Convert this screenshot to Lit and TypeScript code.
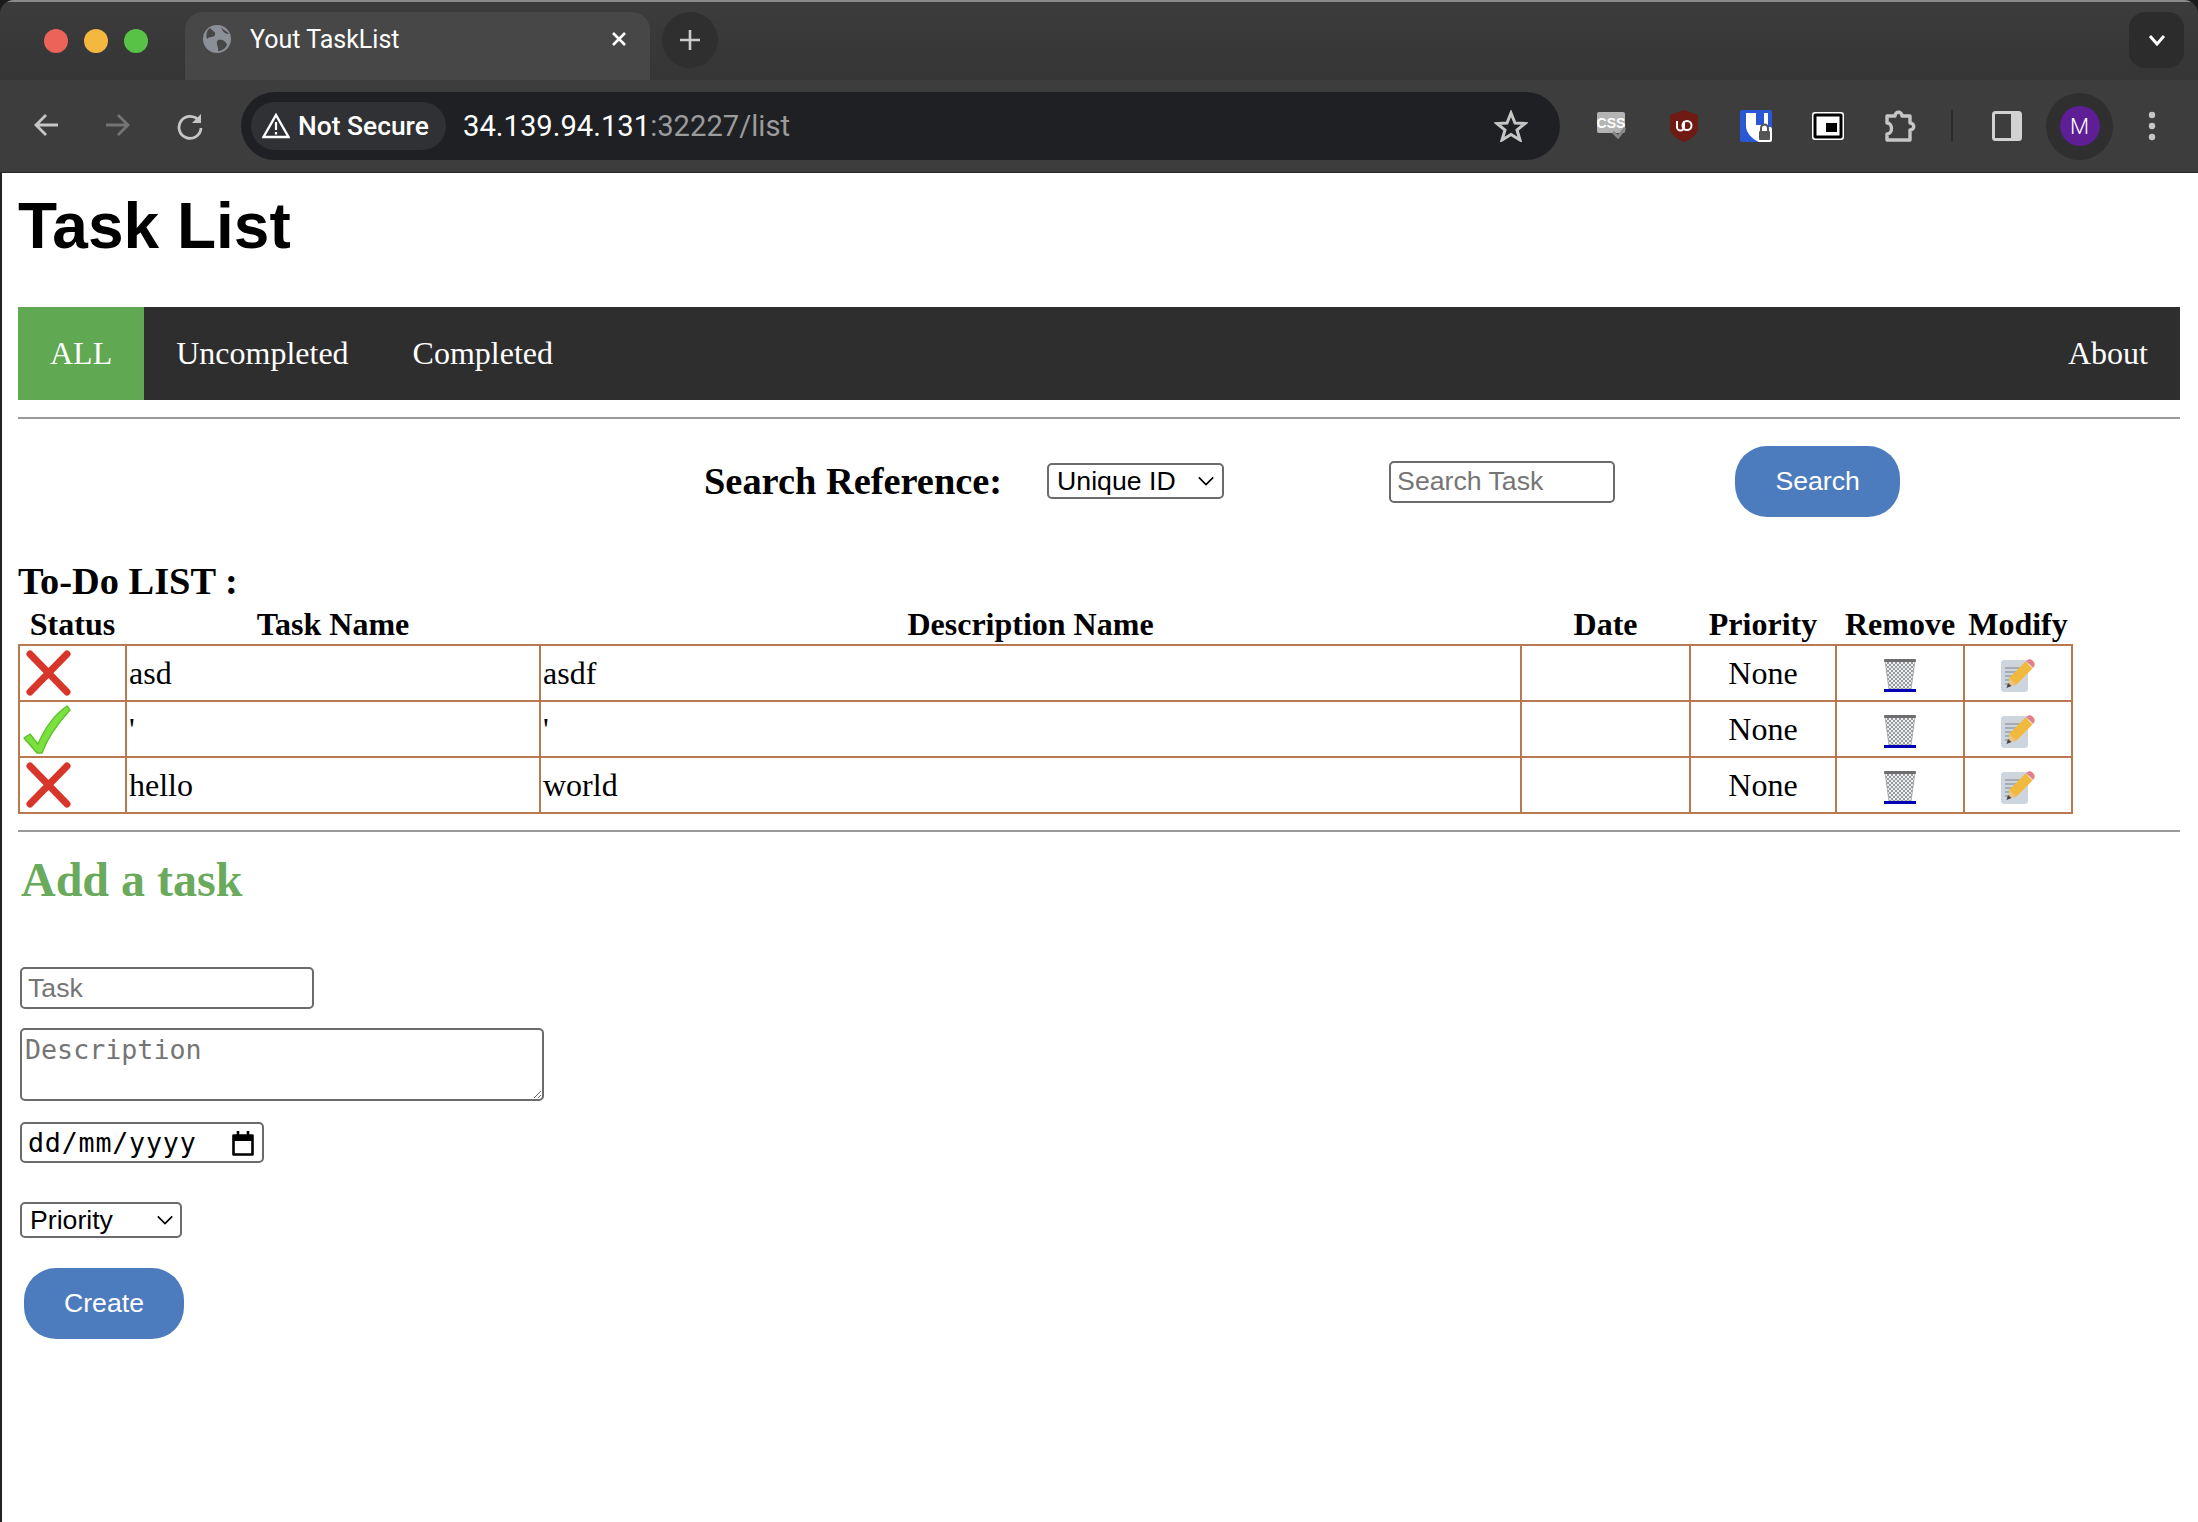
import { LitElement, html, css, unsafeCSS } from 'lit';
import { customElement } from 'lit/decorators.js';

const chevron = `url("data:image/svg+xml,%3Csvg xmlns='http://www.w3.org/2000/svg' width='18' height='18' viewBox='0 0 20 20'%3E%3Cpath d='M2 6l8 8 8-8' fill='none' stroke='black' stroke-width='1.8'/%3E%3C/svg%3E")`;

const crossIcon = html`<svg class="status-icon" width="50" height="48" viewBox="0 0 50 48">
  <path d="M8 5L45 43M45 5L8 43" stroke="#d9362b" stroke-width="7" stroke-linecap="round" fill="none"/>
</svg>`;

const checkIcon = html`<svg class="status-icon" width="50" height="50" viewBox="0 0 50 50">
  <path d="M2 34L8 30L16 40C22 26 32 11 45 2L48 6C38 17 26 32 20 49L15 49Z" fill="#7ae23c" stroke="#5fbf2e" stroke-width="1.4" stroke-linejoin="round"/>
</svg>`;

const trashIcon = html`<svg width="32" height="30" viewBox="0 0 32 30">
  <defs>
    <pattern id="mesh" width="4" height="4" patternUnits="userSpaceOnUse">
      <path d="M0 0L4 4M4 0L0 4" stroke="#8a8f96" stroke-width="0.9"/>
    </pattern>
  </defs>
  <path d="M1 2H31L27 30H5Z" fill="#f0f0f0"/>
  <path d="M1 2H31L27 30H5Z" fill="url(#mesh)" stroke="#a0a0a0" stroke-width="0.8"/>
  <rect x="0" y="0" width="32" height="3" rx="1" fill="#6e6e6e"/>
</svg>`;

const noteIcon = html`<svg width="34" height="33" viewBox="0 0 34 33">
  <rect x="0" y="1" width="27" height="32" rx="3" fill="#ccd5de"/>
  <path d="M4 9H20M4 13H17M4 17H14M4 21H11M4 25H9" stroke="#96a0aa" stroke-width="1.4"/>
  <path d="M11 23L28 6" stroke="#f2b93f" stroke-width="10"/>
  <path d="M6 28L8.5 19L15 26Z" fill="#e6c48c"/>
  <path d="M5.5 29L7 24L10.5 27Z" fill="#444"/>
  <path d="M25 2L27.5 0.5C29 0 30.5 0.5 32 2C33.5 3.5 34 5 33.5 6.5L32 9Z" fill="#e77f88"/>
</svg>`;

const rows = [
  { done: false, name: 'asd', desc: 'asdf' },
  { done: true, name: "'", desc: "'" },
  { done: false, name: 'hello', desc: 'world' },
];

@customElement('app-root')
export class AppRoot extends LitElement {
  static styles = css`
    :host {
      display: block;
      width: 2198px;
      height: 1522px;
      overflow: hidden;
      background: #1b1b1b;
      font-family: 'Liberation Serif', serif;
      color: #000;
    }

    /* browser chrome */
    .window {
      height: 1522px;
      display: flex;
      flex-direction: column;
      border-radius: 14px 14px 0 0;
      overflow: hidden;
    }

    .tabstrip {
      height: 80px;
      box-sizing: border-box;
      padding-top: 12px;
      background: linear-gradient(#3c3c3c, #353535);
      border-top: 2px solid #8a8a8a;
      display: flex;
      font-family: 'Roboto', sans-serif;
      color: #fff;
    }

    .lights {
      width: 185px;
      padding-left: 44px;
      box-sizing: border-box;
      display: flex;
      gap: 16px;
      padding-top: 15px;
    }

    .light {
      width: 24px;
      height: 24px;
      border-radius: 50%;
    }

    .tab {
      width: 465px;
      height: 68px;
      margin-top: -2px;
      box-sizing: border-box;
      background: #474747;
      border-radius: 18px 18px 0 0;
      display: flex;
      align-items: center;
      padding: 0 22px 14px 18px;
      font-size: 25px;
    }

    .tab-title {
      margin-left: 19px;
      flex: 1;
    }

    .newtab {
      width: 56px;
      height: 56px;
      margin: -2px 0 0 12px;
      border-radius: 50%;
      background: #2f2f2f;
      display: flex;
      align-items: center;
      justify-content: center;
    }

    .spacer {
      flex: 1;
    }

    .tabmenu {
      width: 55px;
      height: 56px;
      margin: -2px 14px 0 0;
      border-radius: 16px;
      background: #2c2c2c;
      display: flex;
      align-items: center;
      justify-content: center;
    }

    .toolbar {
      height: 93px;
      box-sizing: border-box;
      background: #3d3d3d;
      border-bottom: 1px solid #262626;
      display: flex;
      align-items: center;
      font-family: 'Roboto', sans-serif;
      color: #fff;
    }

    .nav-btn {
      width: 72px;
      display: flex;
      justify-content: center;
    }

    .nav-btns {
      display: flex;
      margin-left: 10px;
      margin-right: 15px;
    }

    .omnibox {
      width: 1319px;
      height: 68px;
      background: #1f2023;
      border-radius: 34px;
      display: flex;
      align-items: center;
      padding: 0 32px 0 10px;
      box-sizing: border-box;
      flex-shrink: 0;
    }

    .secure {
      height: 48px;
      width: 195px;
      box-sizing: border-box;
      border-radius: 24px;
      background: #303134;
      display: flex;
      align-items: center;
      gap: 8px;
      padding-left: 11px;
      font-size: 26.4px;
      font-weight: 500;
      white-space: nowrap;
    }

    .url {
      margin-left: 17px;
      font-size: 29.2px;
      flex: 1;
      color: #9b9b9b;
    }

    .url b {
      font-weight: 400;
      color: #fff;
    }

    .ext {
      display: flex;
      align-items: center;
      margin-left: 16px;
    }

    .ext-slot {
      width: 72px;
      display: flex;
      justify-content: center;
      align-items: center;
    }

    .sep {
      width: 2px;
      height: 32px;
      background: #2b2b2b;
      margin: 0 39px 0 15px;
    }

    .avatar-wrap {
      width: 67px;
      height: 67px;
      border-radius: 50%;
      background: #2f2f2f;
      display: flex;
      align-items: center;
      justify-content: center;
      margin-left: 24px;
    }

    .avatar {
      width: 40px;
      height: 40px;
      border-radius: 50%;
      background: #5e1f96;
      display: flex;
      align-items: center;
      justify-content: center;
      font-size: 22px;
      font-weight: 300;
    }

    .dots {
      margin-left: 35px;
    }

    /* page */
    .page {
      flex: 1;
      background: #fff;
      border-left: 2px solid #222;
      padding: 0 18px 0 16px;
    }

    h1 {
      margin: 21px 0 49px;
      font: bold 64px/64px 'Liberation Sans', sans-serif;
    }

    .menu {
      height: 93px;
      background: #2e2e2e;
      display: flex;
      font-size: 32px;
      color: #fff;
    }

    .menu a {
      padding: 0 32px;
      line-height: 93px;
    }

    .menu a.active {
      background: #60a851;
    }

    .menu a.about {
      margin-left: auto;
    }

    hr {
      border: 0;
      height: 2px;
      background: #9a9a9a;
      margin: 0;
    }

    .menu + hr {
      margin-top: 17px;
    }

    .search {
      display: flex;
      align-items: center;
      margin: 27px 0 0 686px;
    }

    .search-label {
      font-size: 38.4px;
      font-weight: bold;
      margin-right: 45px;
      margin-bottom: 2px;
    }

    input,
    select,
    textarea,
    .date {
      box-sizing: border-box;
      border: 2px solid #6b6b6b;
      border-radius: 5px;
      background: #fff;
      font: 26.67px 'Liberation Sans', sans-serif;
      color: #000;
      margin: 0;
      outline: none;
    }

    input::placeholder,
    textarea::placeholder {
      color: #757575;
    }

    select {
      appearance: none;
      background-image: ${unsafeCSS(chevron)};
      background-repeat: no-repeat;
    }

    .ref-select {
      width: 177px;
      height: 36px;
      padding: 0 0 0 8px;
      background-position: right 7px center;
      margin: 0 165px 2px 0;
    }

    .search-input {
      width: 226px;
      height: 42px;
      padding: 0 6px;
      margin-right: 120px;
    }

    .btn {
      border: 0;
      background: #4d7cbe;
      color: #fff;
      font: 26.67px 'Liberation Sans', sans-serif;
      border-radius: 32px;
    }

    .search-btn {
      width: 165px;
      height: 71px;
    }

    h3 {
      font-size: 38.4px;
      line-height: 43px;
      margin: 43px 0 0;
    }

    table {
      width: 2053px;
      table-layout: fixed;
      border-collapse: collapse;
      font-size: 32px;
    }

    th {
      padding: 3px 0 1px;
      line-height: 37px;
      font-weight: bold;
      text-align: center;
    }

    td {
      border: 2px solid #b87850;
      height: 54px;
      padding: 0 2px;
      line-height: 37px;
    }

    td.center {
      text-align: center;
    }

    td.status {
      padding: 0;
    }

    .status-icon,
    td svg {
      display: block;
    }

    .status-icon {
      margin-left: 2px;
    }

    .action {
      display: inline-block;
      vertical-align: middle;
      border-bottom: 3px solid #0000b4;
    }

    .action-plain {
      display: inline-block;
      vertical-align: middle;
    }

    .col-status { width: 107px; }
    .col-task { width: 414px; }
    .col-desc { width: 981px; }
    .col-date { width: 169px; }
    .col-pri { width: 146px; }
    .col-rem { width: 128px; }
    .col-mod { width: 108px; }

    table + hr {
      margin-top: 16px;
    }

    h2 {
      margin: 20px 0 60px 3px;
      font-size: 48px;
      line-height: 55px;
      color: #6aaa5c;
    }

    form {
      margin-left: 2px;
      display: flex;
      flex-direction: column;
      align-items: flex-start;
    }

    .task-input {
      width: 294px;
      height: 42px;
      padding: 0 6px;
      margin-bottom: 19px;
    }

    textarea {
      width: 524px;
      height: 73px;
      padding: 4px 3px;
      resize: both;
      font-family: 'DejaVu Sans Mono', monospace;
      display: block;
      margin-bottom: 21px;
    }

    .date {
      width: 244px;
      height: 41px;
      display: flex;
      align-items: center;
      justify-content: space-between;
      padding: 0 8px 0 6px;
      font-family: 'DejaVu Sans Mono', monospace;
      letter-spacing: 0.8px;
      margin-bottom: 39px;
    }

    .pri-select {
      width: 162px;
      height: 36px;
      padding: 0 0 0 8px;
      background-position: right 6px center;
      margin-bottom: 30px;
    }

    .create-btn {
      width: 160px;
      height: 71px;
      margin-left: 4px;
    }
  `;

  render() {
    return html`
      <div class="window">
        <div class="tabstrip">
          <div class="lights">
            <div class="light" style="background:#ec6459"></div>
            <div class="light" style="background:#f4b73f"></div>
            <div class="light" style="background:#58c246"></div>
          </div>
          <div class="tab">
            <svg width="28" height="28" viewBox="0 0 28 28">
              <circle cx="14" cy="14" r="14" fill="#8b8f98"/>
              <path d="M7 3C10 6 13 7 12 10C11 13 6 11 4 14C3 11 3 6 7 3ZM15 15C19 14 23 16 24 20C22 24 18 26 15 26C16 22 12 18 15 15ZM18 2C20 5 24 6 26 9C23 9 20 8 18 2Z" fill="#474747"/>
            </svg>
            <span class="tab-title">Yout TaskList</span>
            <svg width="18" height="18" viewBox="0 0 18 18">
              <path d="M3 3L15 15M15 3L3 15" stroke="#fff" stroke-width="2.6"/>
            </svg>
          </div>
          <div class="newtab">
            <svg width="22" height="22" viewBox="0 0 22 22">
              <path d="M11 1V21M1 11H21" stroke="#ccc" stroke-width="2.6"/>
            </svg>
          </div>
          <div class="spacer"></div>
          <div class="tabmenu">
            <svg width="18" height="12" viewBox="0 0 18 12">
              <path d="M2 2L9 10L16 2" fill="none" stroke="#fff" stroke-width="3"/>
            </svg>
          </div>
        </div>
        <div class="toolbar">
          <div class="nav-btns">
            <div class="nav-btn">
              <svg width="26" height="26" viewBox="0 0 26 26">
                <path d="M25 13H3M13 3L3 13L13 23" fill="none" stroke="#c6c6c6" stroke-width="2.8"/>
              </svg>
            </div>
            <div class="nav-btn">
              <svg width="26" height="26" viewBox="0 0 26 26">
                <path d="M1 13H23M13 3L23 13L13 23" fill="none" stroke="#747474" stroke-width="2.8"/>
              </svg>
            </div>
            <div class="nav-btn">
              <svg width="28" height="28" viewBox="0 0 28 28">
                <path d="M23 9A11 11 0 1 0 25 16" fill="none" stroke="#c6c6c6" stroke-width="2.8"/>
                <path d="M25 2V11H16Z" fill="#c6c6c6"/>
              </svg>
            </div>
          </div>
          <div class="omnibox">
            <div class="secure">
              <svg width="28" height="26" viewBox="0 0 28 26">
                <path d="M14 2L26.5 24H1.5Z" fill="none" stroke="#fff" stroke-width="2.4"/>
                <path d="M14 9V17M14 19V21.5" stroke="#fff" stroke-width="2.2"/>
              </svg>
              <span>Not Secure</span>
            </div>
            <div class="url"><b>34.139.94.131</b>:32227/list</div>
            <svg width="34" height="32" viewBox="0 0 34 32">
              <path d="M17 3L21 13L31 13.5L23 20L26 30L17 24.5L8 30L11 20L3 13.5L13 13Z" fill="none" stroke="#c6c6c6" stroke-width="3"/>
            </svg>
          </div>
          <div class="ext">
            <div class="ext-slot">
              <svg width="30" height="30" viewBox="0 0 30 30">
                <rect x="0" y="1" width="28" height="21" rx="2" fill="#b4b4b4"/>
                <text x="14" y="17" text-anchor="middle" font-family="Liberation Sans" font-size="14" font-weight="bold" fill="#fff">CSS</text>
                <path d="M16 21L21 26L28 17" fill="none" stroke="#888" stroke-width="3"/>
              </svg>
            </div>
            <div class="ext-slot">
              <svg width="30" height="32" viewBox="0 0 30 32">
                <path d="M15 0L29 5V18C29 25 20 30 15 32C10 30 1 25 1 18V5Z" fill="#6f1a12"/>
                <path d="M8 11V17A3.5 3.5 0 0 0 15 17V11" fill="none" stroke="#fff" stroke-width="2"/>
                <circle cx="18" cy="15.5" r="4.5" fill="none" stroke="#fff" stroke-width="2"/>
              </svg>
            </div>
            <div class="ext-slot">
              <svg width="32" height="32" viewBox="0 0 32 32">
                <rect width="32" height="32" rx="2" fill="#2a57d3"/>
                <path d="M6 3H28V20C28 24 23 28 17 31C11 28 6 22 6 16Z" fill="#fff"/>
                <rect x="16" y="3" width="8" height="12" fill="#2a57d3"/>
                <rect x="17" y="17" width="15" height="15" rx="2" fill="#fff"/>
                <rect x="19" y="21" width="11" height="9" rx="1" fill="#555"/>
                <path d="M21 21V18A3.5 3.5 0 0 1 28 18V21" fill="none" stroke="#555" stroke-width="2"/>
              </svg>
            </div>
            <div class="ext-slot">
              <svg width="32" height="28" viewBox="0 0 32 28">
                <rect width="32" height="28" rx="3" fill="#fff"/>
                <rect x="1.5" y="1.5" width="29" height="25" rx="2" fill="#000"/>
                <rect x="4.5" y="4.5" width="23" height="19" fill="#fff"/>
                <rect x="14" y="11" width="11" height="9" fill="#000"/>
              </svg>
            </div>
            <div class="ext-slot">
              <svg width="34" height="34" viewBox="0 0 34 34">
                <path d="M4 7H12C12 2 19 2 19 7H27V14C32 14 32 21 27 21V31H4V25C10 25 10 14 4 14Z" fill="none" stroke="#c6c6c6" stroke-width="3.4" stroke-linejoin="round"/>
              </svg>
            </div>
          </div>
          <div class="sep"></div>
          <svg width="30" height="30" viewBox="0 0 30 30">
            <rect x="1.5" y="1.5" width="27" height="27" rx="2" fill="none" stroke="#d2d2d2" stroke-width="3"/>
            <rect x="19" y="2" width="10" height="26" fill="#d2d2d2"/>
          </svg>
          <div class="avatar-wrap"><div class="avatar">M</div></div>
          <svg class="dots" width="8" height="30" viewBox="0 0 8 30">
            <circle cx="4" cy="4" r="3.2" fill="#c6c6c6"/>
            <circle cx="4" cy="15" r="3.2" fill="#c6c6c6"/>
            <circle cx="4" cy="26" r="3.2" fill="#c6c6c6"/>
          </svg>
        </div>
        <div class="page">
          <h1>Task List</h1>
          <div class="menu">
            <a class="active">ALL</a>
            <a>Uncompleted</a>
            <a>Completed</a>
            <a class="about">About</a>
          </div>
          <hr />
          <div class="search">
            <span class="search-label">Search Reference:</span>
            <select class="ref-select"><option>Unique ID</option></select>
            <input class="search-input" placeholder="Search Task" />
            <button class="btn search-btn">Search</button>
          </div>
          <h3>To-Do LIST :</h3>
          <table>
            <thead>
              <tr>
                <th class="col-status">Status</th>
                <th class="col-task">Task Name</th>
                <th class="col-desc">Description Name</th>
                <th class="col-date">Date</th>
                <th class="col-pri">Priority</th>
                <th class="col-rem">Remove</th>
                <th class="col-mod">Modify</th>
              </tr>
            </thead>
            <tbody>
              ${rows.map(
                (r) => html`<tr>
                  <td class="status">${r.done ? checkIcon : crossIcon}</td>
                  <td>${r.name}</td>
                  <td>${r.desc}</td>
                  <td></td>
                  <td class="center">None</td>
                  <td class="center"><a class="action">${trashIcon}</a></td>
                  <td class="center"><span class="action-plain">${noteIcon}</span></td>
                </tr>`
              )}
            </tbody>
          </table>
          <hr />
          <h2>Add a task</h2>
          <form>
            <input class="task-input" placeholder="Task" />
            <textarea placeholder="Description"></textarea>
            <div class="date">
              <span>dd/mm/yyyy</span>
              <svg width="22" height="26" viewBox="0 0 22 26">
                <path d="M1.5 5.5H20.5V24.5H1.5Z" fill="none" stroke="#000" stroke-width="2.6" stroke-linejoin="round"/>
                <rect x="1" y="5" width="20" height="6" fill="#000"/>
                <path d="M6 1V5M16 1V5" stroke="#000" stroke-width="2.6"/>
              </svg>
            </div>
            <select class="pri-select"><option>Priority</option></select>
            <button type="button" class="btn create-btn">Create</button>
          </form>
        </div>
      </div>
    `;
  }
}

declare global {
  interface HTMLElementTagNameMap {
    'app-root': AppRoot;
  }
}
